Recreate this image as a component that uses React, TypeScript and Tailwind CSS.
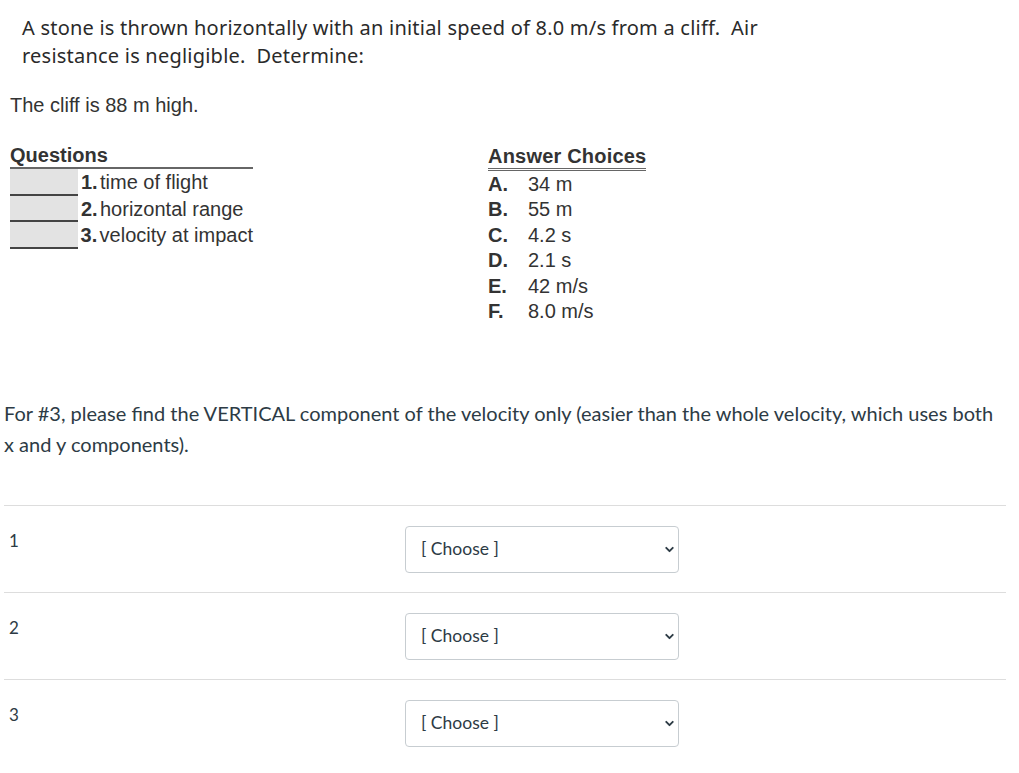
import { ChevronDown } from "lucide-react"

const questions = [
  { n: "1.", label: "time of flight" },
  { n: "2.", label: "horizontal range" },
  { n: "3.", label: "velocity at impact" },
]

const choices = [
  { l: "A.", v: "34 m" },
  { l: "B.", v: "55 m" },
  { l: "C.", v: "4.2 s" },
  { l: "D.", v: "2.1 s" },
  { l: "E.", v: "42 m/s" },
  { l: "F.", v: "8.0 m/s" },
]

const Row = ({ n }: { n: number }) => {
  return (
    <div className="flex items-start border-t border-[#dddddd] pt-[20px] pb-[19px]">
      <div className="w-[401px] pl-[5px] pt-[4px] text-[17px] leading-[22px] text-[#2d3b45]">{n}</div>
      <div className="w-[274px] h-[47px] flex items-center justify-between rounded-[4px] border border-[#c7cdd1] bg-white pl-[15px] pr-[2px]">
        <span className="text-[17.5px] text-[#2d3b45]">[ Choose ]</span>
        <ChevronDown className="w-[13px] h-[13px] text-[#2d3b45]" strokeWidth={3.5} />
      </div>
    </div>
  )
}

export default function App() {
  return (
    <div className="w-[1019px] h-[773px] bg-white overflow-hidden font-['Lato',sans-serif] text-[#2d3b45]">
      {/* worksheet picture */}
      <div className="pl-[10px] pt-[14px]">
        <p className="pl-[12px] font-['Noto_Sans',sans-serif] text-[20px] leading-[28px] text-[#2a2a2a] tracking-[0.22px]">
          A stone is thrown horizontally with an initial speed of 8.0 m/s from a cliff.&nbsp; Air
          <br />
          resistance is negligible.&nbsp; Determine:
        </p>

        <p className="mt-[23px] font-['Liberation_Sans',sans-serif] text-[20px] leading-[24px] text-[#333]">
          The cliff is 88 m high.
        </p>

        <div className="mt-[28px] flex font-['Liberation_Sans',sans-serif] text-[#333]">
          {/* questions */}
          <div className="w-[243px]">
            <div className="font-bold text-[20px] leading-[21px] border-b-[2px] border-[#666] pb-[1px]">Questions</div>
            {questions.map((q) => (
              <div key={q.n} className="flex items-stretch h-[26.5px]">
                <div className="w-[68px] bg-[#e3e3e3] border-b-[2px] border-[#444]" />
                <div className="pl-[3px] flex items-center text-[20px] leading-[22px] whitespace-nowrap">
                  <span className="font-bold w-[19px]">{q.n}</span>
                  <span>{q.label}</span>
                </div>
              </div>
            ))}
          </div>

          {/* answers */}
          <div className="ml-[235px]">
            <div className="font-bold text-[20px] leading-[22px] border-b-[3px] border-double border-[#666] pb-[1px] tracking-[0.2px] whitespace-nowrap">
              Answer Choices
            </div>
            {choices.map((c) => (
              <div key={c.l} className="flex h-[25.5px] items-center text-[20px] leading-[22px]">
                <span className="w-[40px] font-bold">{c.l}</span>
                <span>{c.v}</span>
              </div>
            ))}
          </div>
        </div>
      </div>

      <p className="mt-[74px] pl-[4px] pr-[20px] text-[20px] leading-[31px]">
        For #3, please find the VERTICAL component of the velocity only (easier than the whole velocity, which uses both x and y components).
      </p>

      <div className="mt-[45px] ml-[4px] w-[1002px]">
        <Row n={1} />
        <Row n={2} />
        <Row n={3} />
      </div>
    </div>
  )
}
